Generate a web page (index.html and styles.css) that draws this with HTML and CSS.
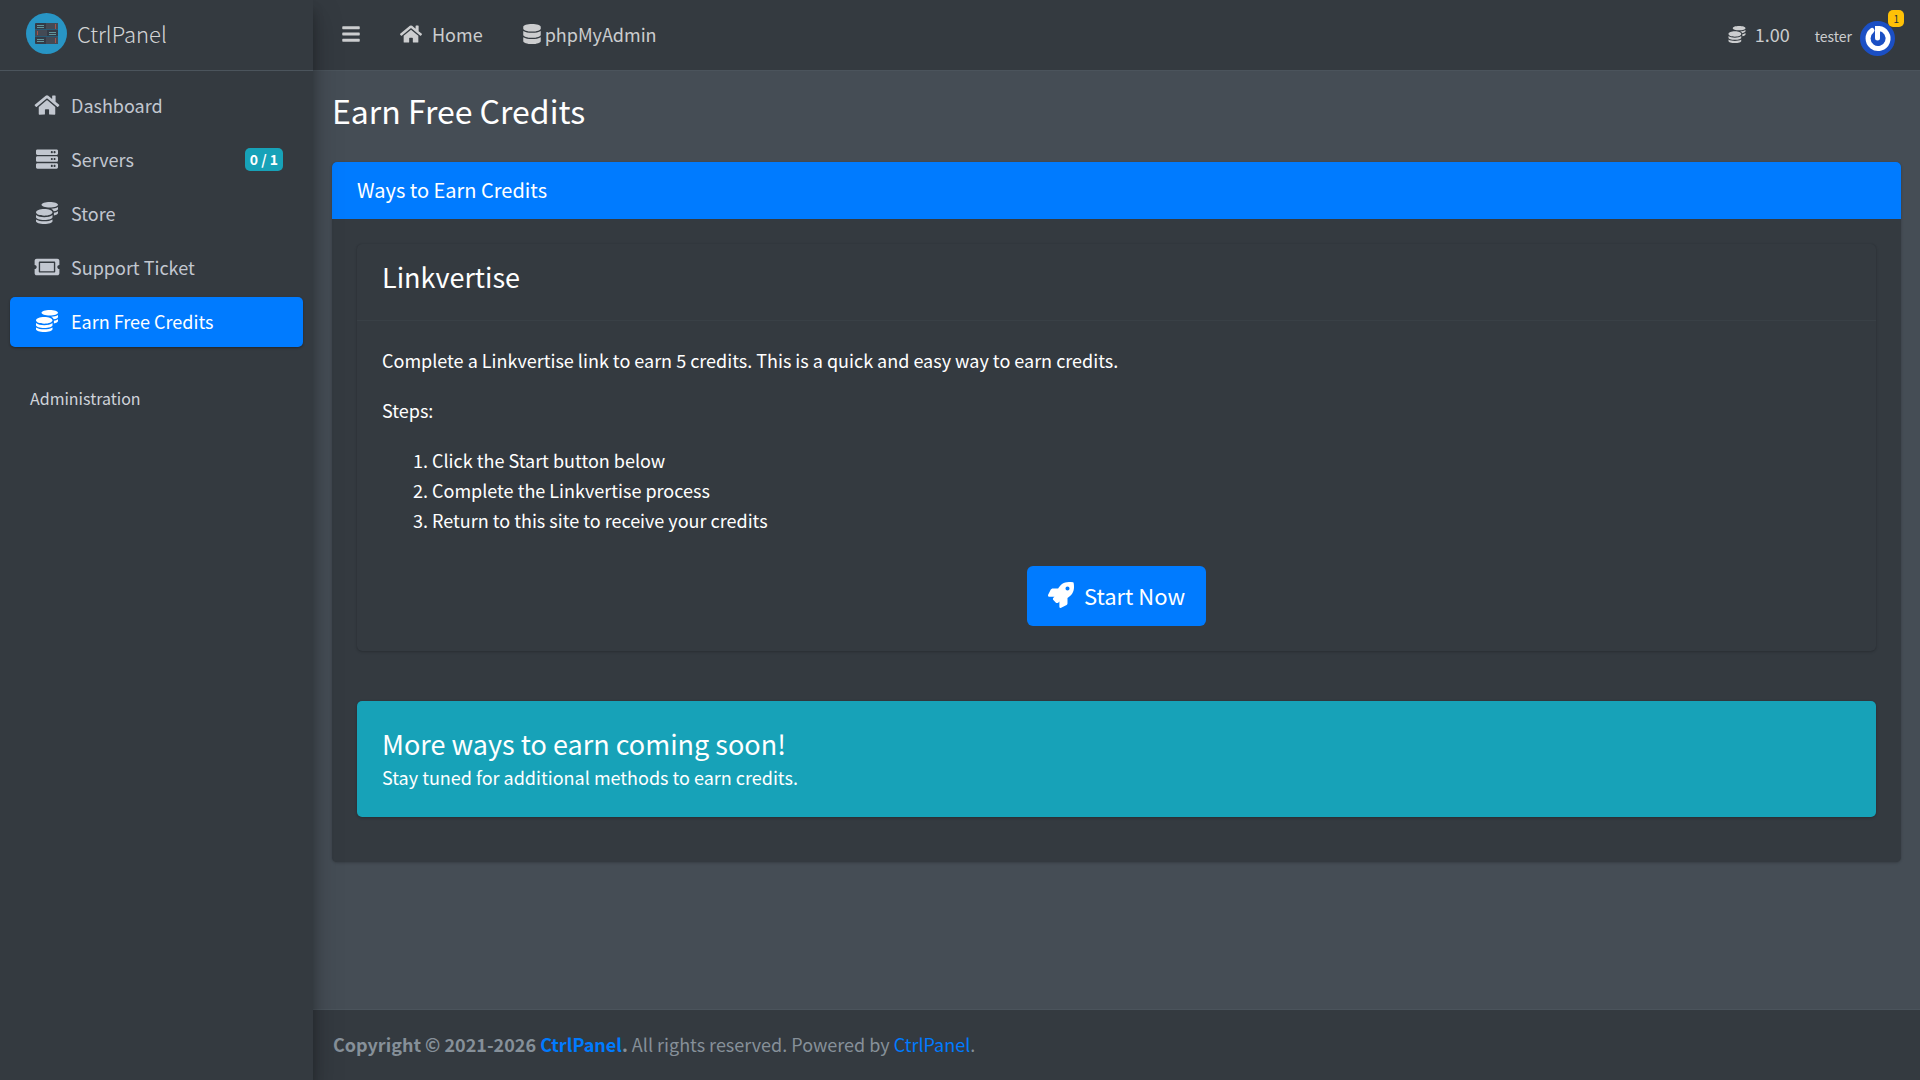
FILE: index.html
```html
<!DOCTYPE html>
<html lang="en">
<head>
    <meta charset="UTF-8">
    <meta name="viewport" content="width=device-width, initial-scale=1.0">
    <title>CtrlPanel</title>
    <link rel="stylesheet" href="styles.css">
</head>
<body>
    <!-- Icon sprite -->
    <svg class="sprite" aria-hidden="true">
        <symbol id="bars" viewBox="0 0 448 512"><path d="M16 132h416c8.837 0 16-7.163 16-16V76c0-8.837-7.163-16-16-16H16C7.163 60 0 67.163 0 76v40c0 8.837 7.163 16 16 16zm0 160h416c8.837 0 16-7.163 16-16v-40c0-8.837-7.163-16-16-16H16c-8.837 0-16 7.163-16 16v40c0 8.837 7.163 16 16 16zm0 160h416c8.837 0 16-7.163 16-16v-40c0-8.837-7.163-16-16-16H16c-8.837 0-16 7.163-16 16v40c0 8.837 7.163 16 16 16z"/></symbol>
        <symbol id="home" viewBox="0 0 576 512"><path d="M280.37 148.26L96 300.11V464a16 16 0 0 0 16 16l112.06-.29a16 16 0 0 0 15.92-16V368a16 16 0 0 1 16-16h64a16 16 0 0 1 16 16v95.64a16 16 0 0 0 16 16.05L464 480a16 16 0 0 0 16-16V300L295.67 148.26a12.19 12.19 0 0 0-15.3 0zM571.6 251.47L488 182.56V44.05a12 12 0 0 0-12-12h-56a12 12 0 0 0-12 12v72.61L318.47 43a48 48 0 0 0-61 0L4.34 251.47a12 12 0 0 0-1.6 16.9l25.5 31A12 12 0 0 0 45.15 301l235.22-193.74a12.19 12.19 0 0 1 15.3 0L530.9 301a12 12 0 0 0 16.9-1.6l25.5-31a12 12 0 0 0-1.7-16.93z"/></symbol>
        <symbol id="database" viewBox="0 0 448 512"><path d="M448 73.143v45.714C448 159.143 347.667 192 224 192S0 159.143 0 118.857V73.143C0 32.857 100.333 0 224 0s224 32.857 224 73.143zM448 176v102.857C448 319.143 347.667 352 224 352S0 319.143 0 278.857V176c48.125 33.143 136.208 48.572 224 48.572S399.874 209.143 448 176zm0 160v102.857C448 479.143 347.667 512 224 512S0 479.143 0 438.857V336c48.125 33.143 136.208 48.572 224 48.572S399.874 369.143 448 336z"/></symbol>
        <symbol id="server" viewBox="0 0 512 512"><path d="M480 160H32c-17.673 0-32-14.327-32-32V64c0-17.673 14.327-32 32-32h448c17.673 0 32 14.327 32 32v64c0 17.673-14.327 32-32 32zm-48-88c-13.255 0-24 10.745-24 24s10.745 24 24 24 24-10.745 24-24-10.745-24-24-24zm-64 0c-13.255 0-24 10.745-24 24s10.745 24 24 24 24-10.745 24-24-10.745-24-24-24zm112 248H32c-17.673 0-32-14.327-32-32v-64c0-17.673 14.327-32 32-32h448c17.673 0 32 14.327 32 32v64c0 17.673-14.327 32-32 32zm-48-88c-13.255 0-24 10.745-24 24s10.745 24 24 24 24-10.745 24-24-10.745-24-24-24zm-64 0c-13.255 0-24 10.745-24 24s10.745 24 24 24 24-10.745 24-24-10.745-24-24-24zm112 248H32c-17.673 0-32-14.327-32-32v-64c0-17.673 14.327-32 32-32h448c17.673 0 32 14.327 32 32v64c0 17.673-14.327 32-32 32zm-48-88c-13.255 0-24 10.745-24 24s10.745 24 24 24 24-10.745 24-24-10.745-24-24-24zm-64 0c-13.255 0-24 10.745-24 24s10.745 24 24 24 24-10.745 24-24-10.745-24-24-24z"/></symbol>
        <symbol id="coins" viewBox="0 0 512 512"><path d="M0 405.3V448c0 35.3 86 64 192 64s192-28.7 192-64v-42.7C342.7 434.4 267.2 448 192 448S41.3 434.4 0 405.3zM320 128c106 0 192-28.7 192-64S426 0 320 0 128 28.7 128 64s86 64 192 64zM0 300.4V352c0 35.3 86 64 192 64s192-28.7 192-64v-51.6c-41.3 34-116.9 51.6-192 51.6S41.3 334.4 0 300.4zm416 11c57.3-11.1 96-31.7 96-55.4v-42.7c-23.2 16.4-57.3 27.6-96 34.5v63.6zM192 160C86 160 0 195.8 0 240s86 80 192 80 192-35.8 192-80-86-80-192-80zm219.3 56.3c60-10.8 100.7-32 100.7-56.3v-42.7c-35.5 25.1-96.5 38.6-160.7 41.8 29.5 14.3 51.2 33.5 60 57.2z"/></symbol>
        <symbol id="ticket" viewBox="0 0 576 512"><path d="M128 160h320v192H128V160zm400 96c0 26.51 21.49 48 48 48v96c0 26.51-21.49 48-48 48H48c-26.51 0-48-21.49-48-48v-96c26.51 0 48-21.49 48-48s-21.49-48-48-48v-96c0-26.51 21.49-48 48-48h480c26.51 0 48 21.49 48 48v96c-26.51 0-48 21.49-48 48zm-48-104c0-13.255-10.745-24-24-24H120c-13.255 0-24 10.745-24 24v208c0 13.255 10.745 24 24 24h336c13.255 0 24-10.745 24-24V152z"/></symbol>
        <symbol id="rocket" viewBox="0 0 512 512"><path d="M505.12 19.094c-1.19-5.531-6.658-11-12.207-12.188C460.716 0 435.507 0 410.407 0 307.175 0 245.27 55.203 199.052 128H94.838c-16.348.016-35.557 11.875-42.887 26.484L2.516 253.297A28.4 28.4 0 0 0 0 264a24.009 24.009 0 0 0 24.006 24h103.81l-22.474 22.469c-11.366 11.361-12.996 32.258 0 45.25l50.904 50.906c11.156 11.188 32.156 13.156 45.277 0l22.475-22.469V488a24.009 24.009 0 0 0 24.006 24 28.56 28.56 0 0 0 10.707-2.516l98.728-49.39c14.629-7.297 26.508-26.5 26.508-42.86V312.797c72.598-46.313 128.035-108.406 128.035-211.094C512.075 76.5 512.075 51.297 505.12 19.094zM384.04 168A40 40 0 1 1 424.05 128 40.023 40.023 0 0 1 384.04 168z"/></symbol>
    </svg>

    <div class="wrapper">
        <aside class="sidebar">
            <a href="#" class="brand">
                <svg class="brand-logo" viewBox="0 0 41 41" aria-hidden="true">
                    <circle cx="20.500" cy="20.500" r="20.500" fill="#2895c5"/>
                    <rect x="9" y="10" width="23" height="21" rx="1" fill="#343b47"/>
                    <path d="M20 10h12v6H20zM9 17h12v6H9zM20 24h12v7H20z" fill="#444a55"/>
                    <path d="M9 16.500h23M9 23.500h23" stroke="#285a75"/>
                    <path d="M11 12.500h7M11 14.500h7M23 19.500h7M23 21.500h7M11 26.500h7M11 28.500h7" stroke="#62969b"/>
                    <path d="M29.500 11v5M11.500 18v4M29.500 25v5" stroke="#a5524a"/>
                </svg>
                <span class="brand-text">CtrlPanel</span>
            </a>
            <nav class="side-nav">
                <a href="#" class="side-link">
                    <span class="side-icon"><svg class="icon"><use href="#home"/></svg></span>
                    <span>Dashboard</span>
                </a>
                <a href="#" class="side-link">
                    <span class="side-icon"><svg class="icon"><use href="#server"/></svg></span>
                    <span>Servers</span>
                    <span class="badge">0 / 1</span>
                </a>
                <a href="#" class="side-link">
                    <span class="side-icon"><svg class="icon"><use href="#coins"/></svg></span>
                    <span>Store</span>
                </a>
                <a href="#" class="side-link">
                    <span class="side-icon"><svg class="icon"><use href="#ticket"/></svg></span>
                    <span>Support Ticket</span>
                </a>
                <a href="#" class="side-link active">
                    <span class="side-icon"><svg class="icon"><use href="#coins"/></svg></span>
                    <span>Earn Free Credits</span>
                </a>
                <div class="side-header">Administration</div>
            </nav>
        </aside>

        <div class="main">
            <header class="navbar">
                <button type="button" class="nav-item menu-button" aria-label="Toggle menu"><svg class="icon"><use href="#bars"/></svg></button>
                <a href="#" class="nav-item home-link"><svg class="icon"><use href="#home"/></svg>Home</a>
                <a href="#" class="nav-item db-link"><svg class="icon"><use href="#database"/></svg>phpMyAdmin</a>
                <div class="nav-right">
                    <a href="#" class="nav-item credits"><svg class="icon"><use href="#coins"/></svg>1.00</a>
                    <a href="#" class="user">
                        <span>tester</span>
                        <span class="avatar-box">
                            <svg class="avatar" viewBox="0 0 35 35" aria-hidden="true">
                                <circle cx="17.500" cy="17.500" r="17.500" fill="#1b4fc4"/>
                                <path d="M12 9.500a10 10 0 1 0 7-2" fill="none" stroke="#fff" stroke-width="5" stroke-linecap="round"/>
                                <path d="M15 5h5v12a2.500 2.500 0 0 1-5 0z" fill="#fff"/>
                            </svg>
                            <span class="notify">1</span>
                        </span>
                    </a>
                </div>
            </header>

            <main class="content">
                <h1>Earn Free Credits</h1>
                <section class="card">
                    <h2 class="card-header">Ways to Earn Credits</h2>
                    <div class="card-body">
                        <div class="card method">
                            <h3 class="method-header">Linkvertise</h3>
                            <div class="method-body">
                                <p>Complete a Linkvertise link to earn 5 credits. This is a quick and easy way to earn credits.</p>
                                <p>Steps:</p>
                                <ol>
                                    <li>Click the Start button below</li>
                                    <li>Complete the Linkvertise process</li>
                                    <li>Return to this site to receive your credits</li>
                                </ol>
                                <div class="actions">
                                    <button type="button" class="start-button"><svg class="icon"><use href="#rocket"/></svg>Start Now</button>
                                </div>
                            </div>
                        </div>
                        <div class="card coming-soon">
                            <h3>More ways to earn coming soon!</h3>
                            <p>Stay tuned for additional methods to earn credits.</p>
                        </div>
                    </div>
                </section>
            </main>

            <footer class="footer">
                <strong>Copyright © 2021-2026 <a href="#">CtrlPanel</a>.</strong> All rights reserved. Powered by <a href="#">CtrlPanel</a>.
            </footer>
        </div>
    </div>
</body>
</html>
```
FILE: styles.css
```css
* {
    box-sizing: border-box;
}

body {
    margin: 0;
    font-family: "Noto Sans CJK SC", "Noto Sans", sans-serif;
    font-size: 18px;
    line-height: 30px;
    color: #fff;
    background-color: #454d55;
}

h1, h2, h3, p, ol {
    margin: 0;
    font-weight: 400;
}

a {
    color: #007bff;
    text-decoration: none;
}

button {
    font: inherit;
    border: none;
    cursor: pointer;
}

.sprite {
    display: none;
}

.icon {
    width: 22px;
    height: 20px;
    fill: currentColor;
    flex-shrink: 0;
}

.wrapper {
    display: flex;
    min-height: 100vh;
}

/* Sidebar */
.sidebar {
    width: 313px;
    flex-shrink: 0;
    background-color: #343a40;
    box-shadow: 0 14px 28px rgba(0, 0, 0, 0.25), 0 10px 10px rgba(0, 0, 0, 0.22);
    z-index: 1;
}

.brand {
    display: flex;
    align-items: center;
    gap: 10px;
    height: 71px;
    padding: 0 26px 4px;
    border-bottom: 1px solid #4b545c;
    color: rgba(255, 255, 255, 0.8);
    font-family: "Noto Sans CJK SC Light", "Noto Sans CJK SC", "Noto Sans", sans-serif;
    font-size: 22px;
    font-weight: 300;
}

.brand-logo {
    width: 41px;
    height: 41px;
}

.side-nav {
    display: flex;
    flex-direction: column;
    gap: 4px;
    padding: 10px;
}

.side-link {
    display: flex;
    align-items: center;
    gap: 8px;
    height: 50px;
    padding: 0 20px 2px;
    border-radius: 5px;
    color: #c2c7d0;
}

.side-link:hover {
    background-color: rgba(255, 255, 255, 0.1);
}

.side-link.active {
    background-color: #007bff;
    color: #fff;
    box-shadow: 0 1px 3px rgba(0, 0, 0, 0.12), 0 1px 2px rgba(0, 0, 0, 0.24);
}

.side-icon {
    display: flex;
    justify-content: center;
    width: 33px;
}

.side-icon .icon {
    width: 26px;
    height: 22px;
}

.badge {
    margin-left: auto;
    padding: 0 5px;
    border-radius: 5px;
    background-color: #17a2b8;
    color: #fff;
    font-size: 14px;
    font-weight: 700;
    line-height: 23px;
}

.side-header {
    padding: 32px 20px 10px;
    color: #d0d4db;
    font-size: 16px;
}

/* Top bar */
.main {
    display: flex;
    flex-direction: column;
    flex: 1;
    min-width: 0;
}

.navbar {
    display: flex;
    align-items: center;
    height: 71px;
    padding: 0 10px 2px 9px;
    border-bottom: 1px solid #4b545c;
    background-color: #343a40;
}

.nav-item {
    display: flex;
    align-items: center;
    padding: 0 20px;
    color: rgba(255, 255, 255, 0.75);
}

.menu-button {
    background: none;
}

.menu-button .icon,
.db-link .icon {
    width: 18px;
}

.home-link {
    gap: 10px;
}

.db-link {
    gap: 4px;
}

.nav-right {
    display: flex;
    align-items: center;
    margin-left: auto;
}

.credits {
    gap: 9px;
    padding-right: 25px;
}

.credits .icon {
    width: 18px;
    height: 17px;
}

.user {
    display: flex;
    align-items: center;
    gap: 8px;
    padding: 8px 15px 0 0;
    color: rgba(255, 255, 255, 0.75);
    font-size: 14px;
    line-height: 26px;
}

.user > span:first-child {
    padding-bottom: 4px;
}

.avatar-box {
    position: relative;
    display: flex;
}

.avatar {
    width: 35px;
    height: 35px;
}

.notify {
    position: absolute;
    top: -11px;
    right: -9px;
    padding: 0 5px;
    border-radius: 5px;
    background-color: #ffc107;
    color: #1f2d3d;
    font-size: 10px;
    line-height: 17px;
}

/* Content */
.content {
    flex: 1;
    padding: 17px 19px 40px;
}

h1 {
    margin-bottom: 30px;
    font-size: 32px;
    line-height: 44px;
}

.card {
    border-radius: 5px;
    background-color: #343a40;
    box-shadow: 0 0 1px rgba(0, 0, 0, 0.125), 0 1px 3px rgba(0, 0, 0, 0.2);
}

.card-header {
    padding: 13px 25px 14px;
    border-radius: 5px 5px 0 0;
    background-color: #007bff;
    font-size: 20px;
}

.card-body {
    padding: 25px 25px 45px;
}

.method {
    margin-bottom: 50px;
}

.method-header {
    padding: 15px 25px 25px;
    border-bottom: 1px solid #394046;
    font-size: 27px;
    line-height: 36px;
}

.method-body {
    padding: 24px 25px 25px;
}

.method-body p {
    margin-bottom: 20px;
}

ol {
    padding-left: 50px;
}

.actions {
    display: flex;
    justify-content: center;
    margin-top: 31px;
}

.start-button {
    display: flex;
    align-items: center;
    gap: 10px;
    height: 60px;
    padding: 0 21px 2px;
    border-radius: 6px;
    background-color: #007bff;
    color: #fff;
    font-size: 22px;
}

.start-button:hover {
    background-color: #0069d9;
}

.start-button .icon {
    width: 26px;
    height: 26px;
}

.coming-soon {
    padding: 25px;
    background-color: #17a2b8;
}

.coming-soon h3 {
    font-size: 27px;
    line-height: 36px;
}

/* Footer */
.footer {
    padding: 19px 20px 21px;
    border-top: 1px solid #4b545c;
    background-color: #343a40;
    color: #869099;
}

.footer a:hover {
    color: #0056b3;
}
```
